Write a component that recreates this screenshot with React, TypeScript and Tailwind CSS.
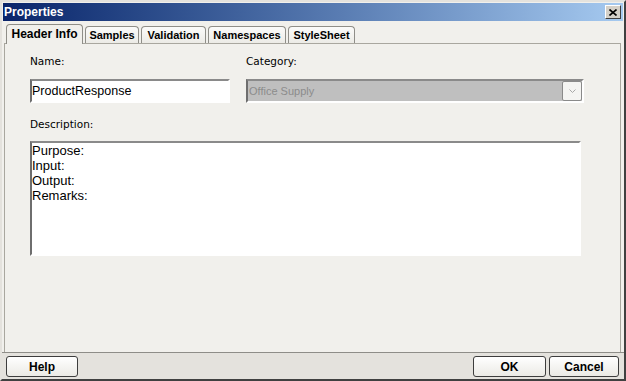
import React from 'react';

const tabs = [
  { label: 'Samples', w: 'w-[54px]' },
  { label: 'Validation', w: 'w-[65px]' },
  { label: 'Namespaces', w: 'w-[78px]' },
  { label: 'StyleSheet', w: 'w-[67px]' },
];

function DialogButton({ label, className }: { label: string; className: string }) {
  return (
    <button
      className={`h-[21px] rounded-[3px] border border-[#3d3d3d] bg-linear-to-b from-white to-[#ebeae5] font-['Liberation_Sans',sans-serif] text-[12px] font-bold text-black ${className}`}
    >
      {label}
    </button>
  );
}

export default function App() {
  return (
    <div className="flex h-[381px] w-[626px] flex-col overflow-hidden border-2 border-t-[#e4e2dd] border-l-[#e4e2dd] border-r-[#404040] border-b-[#404040] bg-[#f1f0ec]">
      {/* title bar */}
      <div className="mx-px mt-px flex h-[18px] shrink-0 items-center justify-between bg-linear-to-r from-[#0a246a] to-[#a6caf0] pl-px pr-[2px]">
        <span className="font-['Liberation_Sans',sans-serif] text-[12px] font-bold leading-none text-white">Properties</span>
        <div className="flex h-[14px] w-[16px] items-center justify-center border border-t-white border-l-white border-r-[#404040] border-b-[#404040] bg-[#d4d0c8]">
          <svg width="8" height="7" viewBox="0 0 8 7">
            <path d="M0.5 0.5 L7.5 6.5 M7.5 0.5 L0.5 6.5" stroke="#000" strokeWidth="1.6" />
          </svg>
        </div>
      </div>

      {/* tabs */}
      <div className="flex h-[22px] shrink-0 items-end gap-[2px] pl-[4px]">
        <div className="relative z-10 -mb-px flex h-[20px] w-[77px] items-center justify-center rounded-t-[4px] border border-b-0 border-[#8f8e88] bg-[#f1f0ec] pb-[2px] font-['Liberation_Sans',sans-serif] text-[12px] font-bold text-black">
          Header Info
        </div>
        {tabs.map((t) => (
          <div
            key={t.label}
            className={`flex h-[17px] items-center justify-center rounded-t-[4px] border border-b-0 border-[#8f8e88] bg-linear-to-b from-[#fbfbfa] to-[#ecebe6] font-['Liberation_Sans',sans-serif] text-[11px] font-bold text-black ${t.w}`}
          >
            {t.label}
          </div>
        ))}
      </div>

      {/* panel */}
      <div className="ml-[2px] mr-[3px] flex-1 border border-b-0 border-[#a9a79f] pl-[25px] pt-[11px]">
        <div className="flex gap-[16px]">
          <div className="flex w-[200px] flex-col">
            <div className="h-[13px] font-['DejaVu_Sans',sans-serif] text-[10.5px] leading-[13px] text-black">Name:</div>
            <div className="mt-[11px] flex h-[24px] items-center border-2 border-t-[#8a8a8a] border-l-[#6e6e6e] border-r-white border-b-white bg-white font-['Liberation_Sans',sans-serif] text-[12.5px] text-black">
              ProductResponse
            </div>
          </div>
          <div className="flex w-[338px] flex-col">
            <div className="h-[13px] font-['DejaVu_Sans',sans-serif] text-[10.5px] leading-[13px] text-black">Category:</div>
            <div className="mt-[11px] flex h-[24px] items-center justify-between border-2 border-t-[#8a8a8a] border-l-[#6e6e6e] border-r-white border-b-white bg-[#bfbfbf] pl-px">
              <span className="font-['Liberation_Sans',sans-serif] text-[11px] text-[#8c8c8c]">Office Supply</span>
              <div className="flex h-[20px] w-[20px] items-center justify-center rounded-[2px] border border-[#8a8a8a] bg-[#f4f4f2]">
                <svg width="7" height="4" viewBox="0 0 7 4">
                  <path d="M0.5 0.5 L3.5 3.5 L6.5 0.5" stroke="#a8a8a8" strokeWidth="1" fill="none" />
                </svg>
              </div>
            </div>
          </div>
        </div>

        <div className="mt-[15px] h-[13px] font-['DejaVu_Sans',sans-serif] text-[10.5px] leading-[13px] text-black">Description:</div>
        <div className="mt-[10px] h-[115px] w-[551px] border-2 border-t-[#8a8a8a] border-l-[#6e6e6e] border-r-white border-b-white bg-white font-['Liberation_Sans',sans-serif] text-[13px] leading-[15px] text-black">
          <div>Purpose:</div>
          <div>Input:</div>
          <div>Output:</div>
          <div>Remarks:</div>
        </div>
      </div>

      {/* button bar */}
      <div className="flex h-[27px] shrink-0 items-start justify-between border-t border-[#8e8d88] bg-[#e4e2dd] pl-[4px] pr-[5px] pt-[3px]">
        <DialogButton label="Help" className="w-[72px]" />
        <div className="flex gap-[3px]">
          <DialogButton label="OK" className="w-[73px]" />
          <DialogButton label="Cancel" className="w-[70px]" />
        </div>
      </div>
    </div>
  );
}
